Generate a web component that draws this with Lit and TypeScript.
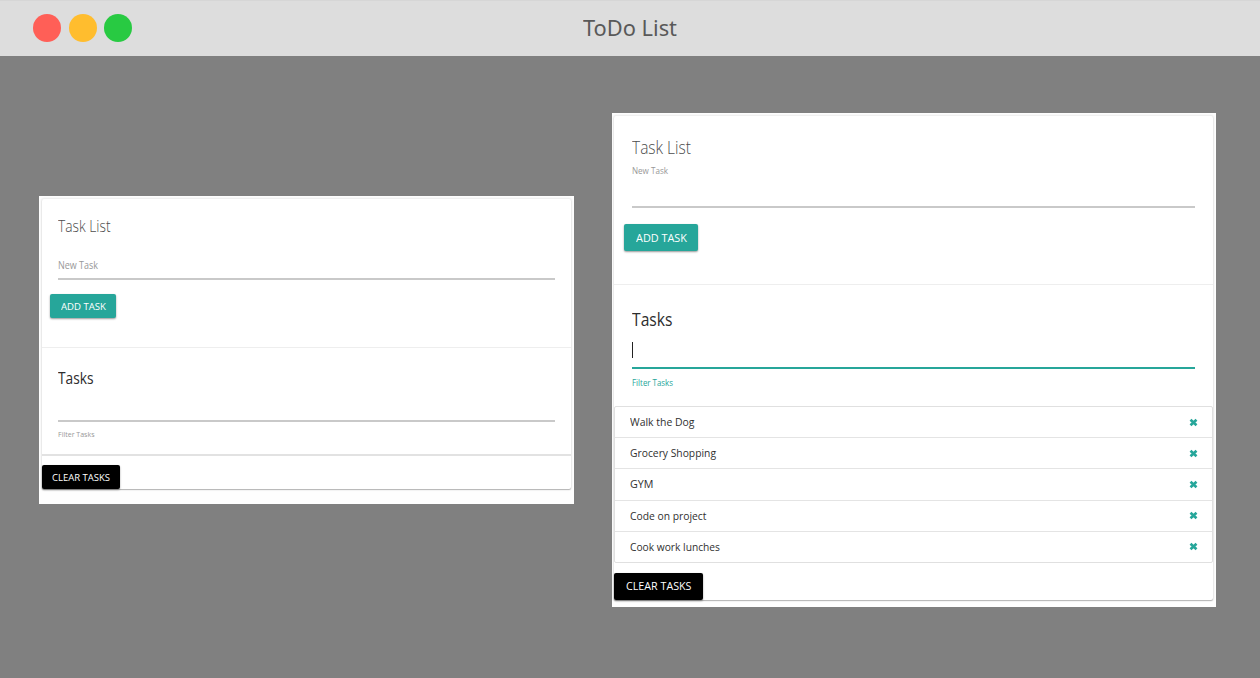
import { LitElement, html, css } from "lit";
import { customElement, property, state, query } from "lit/decorators.js";

/* One line of text, condensed or widened to a given width. */
@customElement("fit-text")
class FitText extends LitElement {
  @property() text = "";
  @property({ type: Number }) width = 0;
  @state() private ratio = 1;
  @query("span") private line!: HTMLSpanElement;

  static styles = css`
    :host { display: block; white-space: nowrap; }
    span { display: inline-block; transform-origin: 0 50%; }
  `;

  firstUpdated() {
    const natural = this.line.getBoundingClientRect().width;
    if (natural > 0) this.ratio = this.width / natural;
  }

  render() {
    return html`<style>:host { width: ${this.width}px; }</style
      ><span style="transform: scaleX(${this.ratio})">${this.text}</span>`;
  }
}

const cardStyles = css`
  :host { display: block; background: #fefefe; box-sizing: border-box; font-family: "Open Sans", "Noto Sans", sans-serif; }
  .card { box-sizing: border-box; background: #fff; border-radius: 2px; box-shadow: 0 1px 1px rgba(0,0,0,.25), 0 0 2px 1px rgba(0,0,0,.08); display: flex; flex-direction: column; align-items: stretch; }
  .part { box-sizing: border-box; display: flex; flex-direction: column; align-items: flex-start; flex: none; }
  .title { font-weight: 300; color: #4c4c4c; }
  .heading { color: #2d2d2d; font-weight: 400; }
  .label { color: #989898; }
  .rule { align-self: stretch; background: #c9c9c9; flex: none; }
  .button { display: flex; align-items: center; justify-content: center; background: #26a69a; color: #fff; font-weight: 500; border-radius: 2px; box-shadow: 0 1px 2px rgba(0,0,0,.4); flex: none; box-sizing: border-box; }
  .clear { background: #000; }
`;

@customElement("empty-card")
class EmptyCard extends LitElement {
  static styles = [cardStyles, css`
    :host { width: 535px; height: 308px; padding: 3px 3px 15px; }
    .card { height: 290px; }
    .entry { height: 149px; padding: 15px 16px 0 15.5px; border-bottom: 1px solid #eee; }
    .title { font-size: 16.5px; line-height: 24px; }
    .entry .label { font-size: 10px; line-height: 16px; margin-top: 19px; }
    .entry .rule { height: 2px; margin-top: 5px; }
    .button { height: 24px; font-size: 9.8px; line-height: 25px; }
    .add { width: 66px; margin: 14px 0 0 -7.5px; }
    .filter { height: 109px; padding: 18px 16px 0 15.5px; border-bottom: 2px solid #e2e2e2; }
    .heading { font-size: 16.5px; line-height: 24px; }
    .filter .rule { height: 2px; margin-top: 30px; }
    .filter .label { font-size: 8px; line-height: 14px; margin-top: 4.5px; }
    .clear { width: 78.5px; margin: 9px 0 0 -0.5px; }
    .filter { height: 108px; }
  `];

  render() {
    return html`<section class="card">
      <div class="part entry">
        <fit-text class="title" text="Task List" width="52.5"></fit-text>
        <fit-text class="label" text="New Task" width="40"></fit-text>
        <div class="rule"></div>
        <div class="button add"><fit-text text="ADD TASK" width="45"></fit-text></div>
      </div>
      <div class="part filter">
        <fit-text class="heading" text="Tasks" width="35.5"></fit-text>
        <div class="rule"></div>
        <fit-text class="label" text="Filter Tasks" width="36.5"></fit-text>
      </div>
      <div class="button clear"><fit-text text="CLEAR TASKS" width="58"></fit-text></div>
    </section>`;
  }
}

interface Task { name: string; width: number; }

@customElement("filled-card")
class FilledCard extends LitElement {
  private tasks: Task[] = [
    { name: "Walk the Dog", width: 64.5 },
    { name: "Grocery Shopping", width: 86 },
    { name: "GYM", width: 23.5 },
    { name: "Code on project", width: 76.5 },
    { name: "Cook work lunches", width: 90 },
  ];

  static styles = [cardStyles, css`
    :host { width: 604px; height: 494px; padding: 3px 3.5px 7px 2px; }
    .card { height: 484px; }
    .entry { height: 169px; padding: 18px 17.5px 0 18px; border-bottom: 1px solid #eee; }
    .title { font-size: 18.5px; line-height: 26px; }
    .entry .label { font-size: 8.5px; line-height: 14px; margin-top: 4px; }
    .entry .rule { height: 2px; margin-top: 28px; }
    .button { height: 27px; font-size: 10.5px; line-height: 26px; }
    .add { width: 74px; margin: 16px 0 0 -8px; }
    .filter { height: 121px; padding: 20.5px 17.5px 0 18px; }
    .heading { font-size: 18.5px; line-height: 25px; }
    .caret { width: 1px; height: 16px; margin-top: 11.5px; background: #222; }
    .filter .rule { height: 2px; margin-top: 8.5px; background: #26a69a; }
    .filter .label { font-size: 8.5px; line-height: 14px; margin-top: 7px; color: #26a69a; }
    .list { list-style: none; margin: 0; padding: 0; border: 1px solid #e0e0e0; border-radius: 2px; height: 157px; box-sizing: border-box; display: grid; grid-template-rows: 30px repeat(4, 1fr); }
    .item { display: flex; align-items: center; justify-content: space-between; padding: 0 14px 0 15px; color: #303030; font-size: 11.5px; line-height: 16px; }
    .item + .item { border-top: 1px solid #e4e4e4; }
    .cross { width: 9px; height: 9px; display: block; }
    .clear { width: 88.5px; line-height: 25px; margin: 10px 0 0; }
  `];

  render() {
    return html`<section class="card">
      <div class="part entry">
        <fit-text class="title" text="Task List" width="59"></fit-text>
        <fit-text class="label" text="New Task" width="36"></fit-text>
        <div class="rule"></div>
        <div class="button add"><fit-text text="ADD TASK" width="51"></fit-text></div>
      </div>
      <div class="part filter">
        <fit-text class="heading" text="Tasks" width="40.5"></fit-text>
        <div class="caret"></div>
        <div class="rule"></div>
        <fit-text class="label" text="Filter Tasks" width="41"></fit-text>
      </div>
      <ul class="list">
        ${this.tasks.map((task) => html`<li class="item">
          <fit-text .text=${task.name} .width=${task.width}></fit-text>
          <svg class="cross" viewBox="0 0 9 9"><path d="M1.5 1.7 7.5 7.3M7.5 1.7 1.5 7.3" fill="none" stroke="#26a69a" stroke-width="2.6"/></svg>
        </li>`)}
      </ul>
      <div class="button clear"><fit-text text="CLEAR TASKS" width="65.5"></fit-text></div>
    </section>`;
  }
}

@customElement("app-root")
class AppRoot extends LitElement {
  static styles = css`
    :host { display: flex; flex-direction: column; width: 1260px; height: 678px; overflow: hidden; background: #808080; }
    .bar { height: 56px; flex: none; box-sizing: border-box; border-top: 1px solid #d6d6d6; background: #ddd; display: grid; grid-template-columns: 1fr auto 1fr; align-items: center; padding: 0 33px 2px; }
    .dots { display: flex; gap: 7.5px; }
    .dot { width: 28px; height: 28px; border-radius: 50%; }
    .red { background: #ff5f57; }
    .amber { background: #ffbd2e; }
    .green { background: #28ca42; }
    .name { font: 400 22px/30px "Noto Sans", "Open Sans", sans-serif; color: #595959; padding-bottom: 1px; }
    .stage { flex: 1; display: flex; gap: 38px; padding: 0 44px 0 39px; align-items: flex-start; }
    .left { margin-top: 140px; flex: none; }
    .right { margin-top: 57px; flex: none; }
  `;

  render() {
    return html`<header class="bar">
        <div class="dots"><i class="dot red"></i><i class="dot amber"></i><i class="dot green"></i></div>
        <fit-text class="name" text="ToDo List" width="94"></fit-text>
      </header>
      <main class="stage">
        <empty-card class="left"></empty-card>
        <filled-card class="right"></filled-card>
      </main>`;
  }
}
